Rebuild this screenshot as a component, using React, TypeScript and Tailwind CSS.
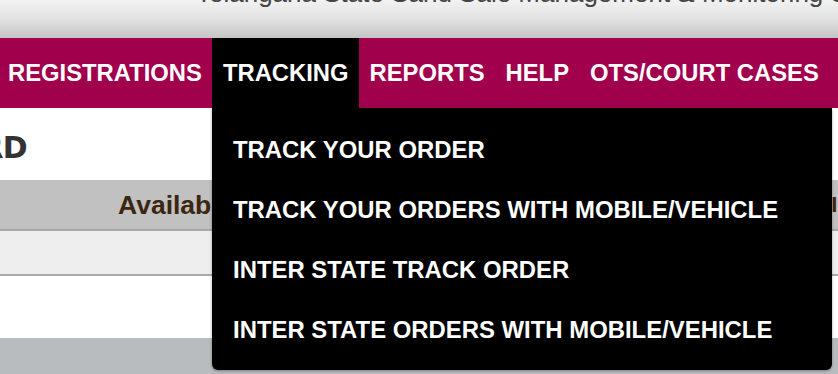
import React from 'react'

const navItems = ['REGISTRATIONS', 'TRACKING', 'REPORTS', 'HELP', 'OTS/COURT CASES']

const trackingLinks = [
  'TRACK YOUR ORDER',
  'TRACK YOUR ORDERS WITH MOBILE/VEHICLE',
  'INTER STATE TRACK ORDER',
  'INTER STATE ORDERS WITH MOBILE/VEHICLE',
]

export default function App() {
  return (
    <div className="relative h-[374px] w-[838px] overflow-hidden bg-white font-['Liberation_Sans',Arial,sans-serif]">
      {/* site banner, only its lower edge is in view */}
      <header className="h-[38px] overflow-hidden bg-gradient-to-b from-[#f2f2f2] via-[#e2e2e2] to-[#c4c4c4]">
        <p className="-mt-[26px] whitespace-nowrap pl-[196px] text-[26px] text-[#444]">
          Telangana State Sand Sale Management &amp; Monitoring System
        </p>
      </header>

      <nav className="flex h-[70px] bg-[#a1004c]">
        <div className="-ml-[2.5px] flex whitespace-nowrap">
          {navItems.map((item) => (
            <a
              key={item}
              href="#"
              className={`flex items-center px-[10.5px] text-[23.8px] font-bold text-white ${
                item === 'TRACKING' ? 'bg-black' : ''
              }`}
            >
              {item}
            </a>
          ))}
        </div>
      </nav>

      <main>
        <div className="flex h-[72px] items-center">
          <div className="flex w-[27px] justify-end whitespace-nowrap pt-[6px]">
            <h2 className="font-['DejaVu_Sans',sans-serif] text-[30px] font-bold tracking-tight text-[#333]">
              DASHBOARD
            </h2>
          </div>
        </div>

        <div className="flex h-[51px] items-center justify-between border-b-2 border-[#a8a8a8] bg-[#c1c1c1] pl-[118px]">
          <span className="pt-[2px] text-[26.5px] font-bold text-[#3b2612]">Available</span>
          <span className="mr-[-8px] text-[22px] font-bold text-[#3b2612]">Ir</span>
        </div>
        <div className="h-[45px] border-b-2 border-[#aaaaaa] bg-[#eeeeee]" />
        <div className="h-[62px] bg-white" />
        <div className="h-[40px] bg-[#b9bcbf]" />
      </main>

      {/* open TRACKING menu */}
      <ul className="absolute left-[212px] top-[108px] h-[262px] w-[620px] rounded-b-[6px] bg-black pt-[12px] shadow-[0_1px_3px_rgba(0,0,0,0.35)]">
        {trackingLinks.map((link) => (
          <li key={link} className="flex h-[60px] items-center pl-[21px]">
            <a href="#" className="whitespace-nowrap text-[23.9px] font-bold text-white">
              {link}
            </a>
          </li>
        ))}
      </ul>
    </div>
  )
}
